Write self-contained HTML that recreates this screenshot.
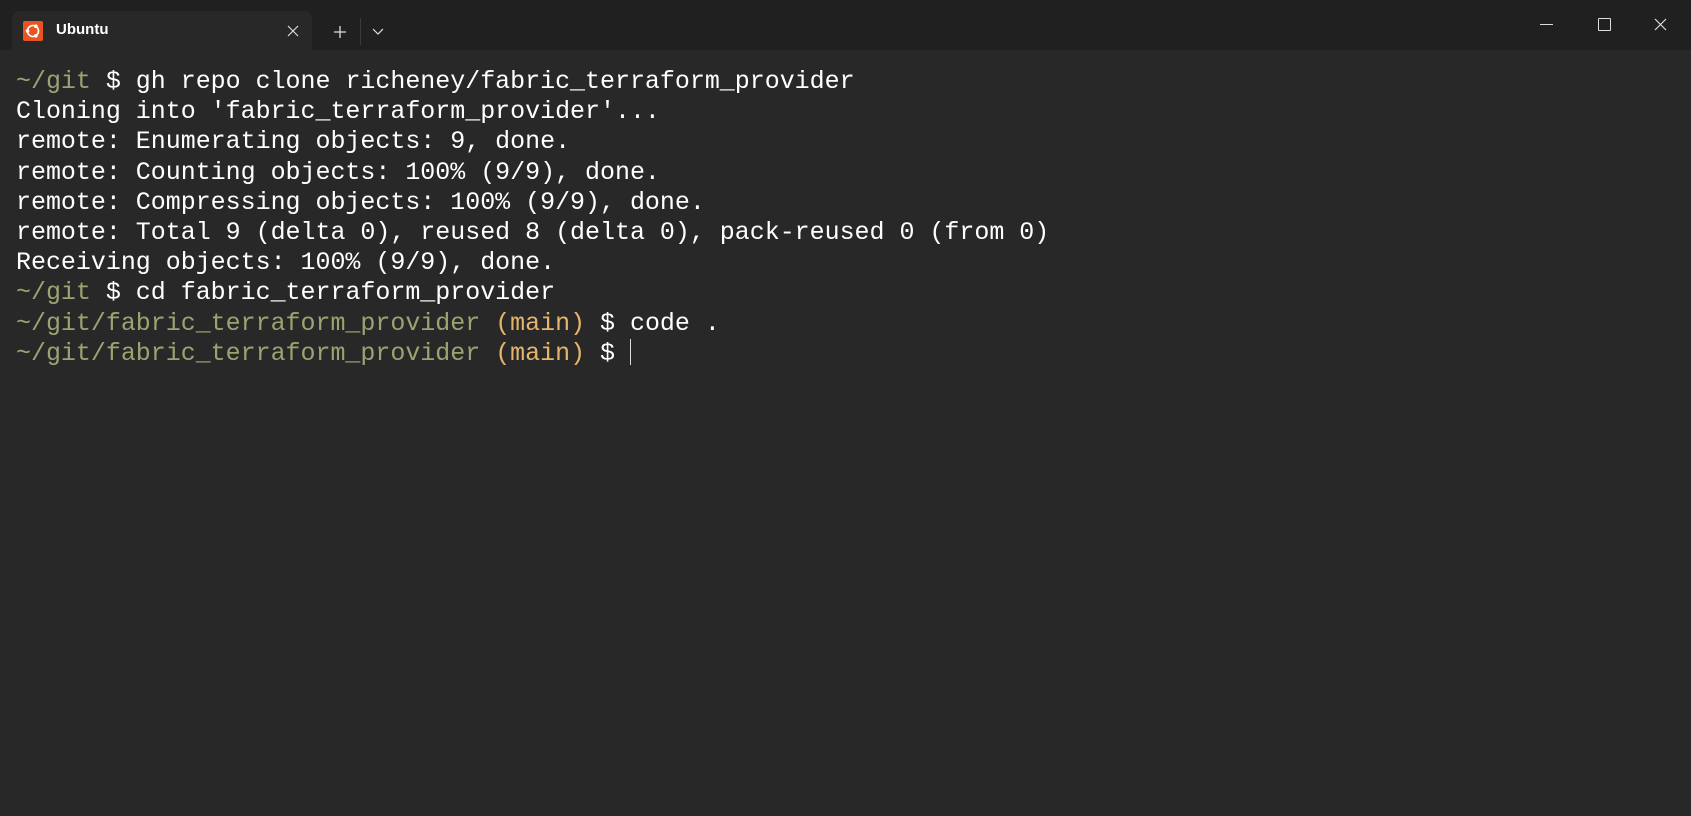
<!DOCTYPE html>
<html><head><style>
html,body{margin:0;padding:0;width:1691px;height:816px;overflow:hidden;background:#202020;}
.bar{position:absolute;left:0;top:0;width:1691px;height:50px;background:#202020;}
.tab{position:absolute;left:12px;top:11px;width:300px;height:40px;background:#282828;border-radius:8px 8px 0 0;}
.tab .ic{position:absolute;left:11px;top:10px;width:20px;height:20px;background:#e95420;border-radius:2px;}
.tab .t{position:absolute;left:44px;top:10px;font:600 15px "Liberation Sans",sans-serif;color:#fff;}
.term{position:absolute;left:0;top:50px;width:1691px;height:766px;background:#282828;}
pre{position:absolute;left:16px;top:17px;margin:0;font:24.96px/30.2px "Liberation Mono",monospace;color:#fff;}
.g{color:#9aa471}.o{color:#e6b56c}
.cur{display:inline-block;width:1px;height:26px;background:#ddd;vertical-align:-5px}
</style></head><body>
<div class="bar"></div>
<div class="tab"><div class="ic"><svg width="20" height="20" viewBox="0 0 20 20"><circle cx="10" cy="10" r="5.5" fill="none" stroke="#fff" stroke-width="1.6"/><circle cx="4.5" cy="10" r="1.8" fill="#fff"/><circle cx="12.8" cy="5.2" r="1.8" fill="#fff"/><circle cx="12.8" cy="14.8" r="1.8" fill="#fff"/></svg></div><div class="t">Ubuntu</div>
<svg style="position:absolute;left:275px;top:14px" width="12" height="12"><path d="M1 1L11 11M11 1L1 11" stroke="#ddd" stroke-width="1.2"/></svg></div>
<svg style="position:absolute;left:333px;top:25px" width="14" height="14"><path d="M7 1V13M1 7H13" stroke="#ddd" stroke-width="1.3"/></svg>
<div style="position:absolute;left:360px;top:18px;width:1px;height:27px;background:#3a3a3a"></div>
<svg style="position:absolute;left:372px;top:28px" width="12" height="8"><path d="M1 1L6 6L11 1" fill="none" stroke="#ddd" stroke-width="1.2"/></svg>
<div style="position:absolute;left:1540px;top:24px;width:13px;height:1px;background:#ddd"></div>
<div style="position:absolute;left:1598px;top:18px;width:11px;height:11px;border:1.3px solid #ddd;border-radius:1px"></div>
<svg style="position:absolute;left:1654px;top:18px" width="13" height="13"><path d="M1 1L12 12M12 1L1 12" stroke="#ddd" stroke-width="1.2"/></svg>
<div class="term"><pre><span class="g">~/git</span> $ gh repo clone richeney/fabric_terraform_provider
Cloning into 'fabric_terraform_provider'...
remote: Enumerating objects: 9, done.
remote: Counting objects: 100% (9/9), done.
remote: Compressing objects: 100% (9/9), done.
remote: Total 9 (delta 0), reused 8 (delta 0), pack-reused 0 (from 0)
Receiving objects: 100% (9/9), done.
<span class="g">~/git</span> $ cd fabric_terraform_provider
<span class="g">~/git/fabric_terraform_provider</span> <span class="o">(main)</span> $ code .
<span class="g">~/git/fabric_terraform_provider</span> <span class="o">(main)</span> $ <span class="cur"></span></pre></div>
</body></html>
